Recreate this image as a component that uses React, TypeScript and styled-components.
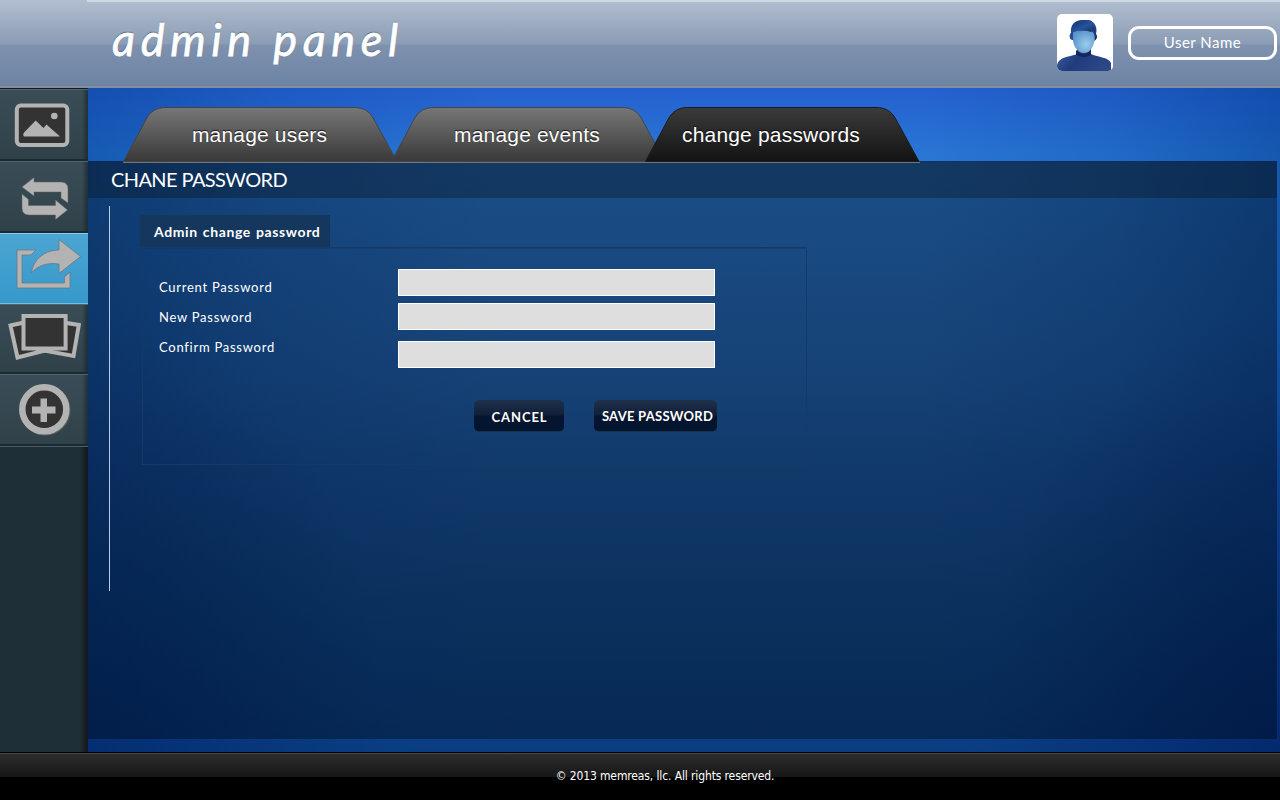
import React from "react";
import styled, { createGlobalStyle } from "styled-components";

const GlobalStyle = createGlobalStyle`
  * { box-sizing: border-box; }
  body { margin: 0; background: #000; overflow: hidden; }
`;

const gothic = `Lato, "Liberation Sans", sans-serif`;

const Page = styled.div`
  width: 1280px;
  height: 800px;
  display: flex;
  flex-direction: column;
  color: #fff;
  font-family: ${gothic};
`;

const Header = styled.header`
  height: 88px;
  flex: none;
  display: flex;
  align-items: flex-start;
  justify-content: space-between;
  padding: 0 3px 0 112px;
  border-bottom: 2px solid #848d9c;
  background:
    linear-gradient(#d0d8e4, #d0d8e4) 87px 0 / 1193px 2px no-repeat,
    linear-gradient(#b2bed0 0, #8b9cb4 44px, #7e92af 45px, #6d83a3 86px);
`;

const Brand = styled.h1`
  margin: 0;
  padding-top: 9px;
  font-family: Lato, cursive;
  font-style: italic;
  font-weight: 400;
  font-size: 45px;
  line-height: 60px;
  letter-spacing: 5.7px;
  white-space: nowrap;
  -webkit-text-stroke: 0.8px #fff;
  text-shadow: 0 -1px 1px #38495f;
`;

const Account = styled.div`
  display: flex;
  gap: 15px;
  padding-top: 14px;
`;

const Avatar = styled.svg`
  width: 56px;
  height: 57px;
  border-radius: 5px;
  background: #fff;
`;

const UserName = styled.div`
  width: 149px;
  height: 34px;
  margin-top: 12px;
  border: 3px solid #fff;
  border-radius: 11px;
  font-size: 15px;
  line-height: 27px;
  text-align: center;
  letter-spacing: 0.5px;
`;

const Body = styled.div`
  height: 664px;
  flex: none;
  display: flex;
`;

const Sidebar = styled.nav`
  width: 88px;
  flex: none;
  border-top: 1px solid #101b21;
  background: linear-gradient(90deg, #1f2f37 0, #1f2f37 80px, #151b1f 86px, #14181b 88px);
`;

const SideItem = styled.a<{ $h: number; $active?: boolean }>`
  display: block;
  height: ${(p) => p.$h}px;
  border-top: 1px solid ${(p) => (p.$active ? "#83cdec" : "#51656e")};
  border-bottom: ${(p) => (p.$active ? "1px solid #79bddd" : "2px solid #1b2930")};
  background: ${(p) =>
    p.$active
      ? "linear-gradient(#4ba5d2, #3698cb)"
      : "linear-gradient(90deg, transparent 82px, rgba(15,28,34,.5) 87px), linear-gradient(#3a4d56, #304149)"};
`;

const SideEnd = styled.div`
  height: 1px;
  background: #4b5d66;
`;

const SideIcon = styled.svg`
  display: block;
  width: 88px;
  height: 68px;
`;

const Main = styled.main`
  flex: 1;
  display: flex;
  flex-direction: column;
  padding: 19px 3px 13px 0;
  background:
    radial-gradient(ellipse 300px 440px at 0 100%, rgba(0,22,78,.36), transparent),
    radial-gradient(ellipse 300px 440px at 100% 100%, rgba(0,14,74,.4), transparent),
    linear-gradient(90deg, rgba(0,58,140,.46) 0, rgba(0,58,140,.2) 15%, transparent 34%, transparent 70%, rgba(0,58,140,.2) 86%, rgba(0,58,140,.5) 100%),
    linear-gradient(#2560d0 0, #2976d4 66px, #2876cc 112px, #2264b4 300px, #1b58a4 382px, #114d91 512px, #0a3d80 664px);
`;

const Tabs = styled.div`
  display: flex;
  height: 54px;
  padding-left: 35px;
`;

const Tab = styled.a<{ $overlap?: number }>`
  display: grid;
  flex: none;
  width: 275px;
  height: 56px;
  margin-left: ${(p) => -(p.$overlap || 0)}px;
  z-index: 1;
  > * { grid-area: 1 / 1; }
`;

const TabLabel = styled.span<{ $shift?: number }>`
  padding-right: ${(p) => p.$shift || 0}px;
  text-align: center;
  font-family: "Liberation Sans", Arial, sans-serif;
  font-size: 21px;
  line-height: 56px;
  letter-spacing: 0.18px;
  white-space: nowrap;
  text-shadow: 0 -1px 1px rgba(0,0,0,.75);
`;

const Panel = styled.section`
  flex: 1;
  background: rgba(0,0,0,.35);
`;

const PanelTitle = styled.h2`
  margin: 0;
  height: 37px;
  padding-left: 23px;
  border-top: 1px solid rgba(0,40,90,.2);
  background: rgba(6,14,22,.33);
  font-size: 20px;
  font-weight: 400;
  line-height: 35px;
  letter-spacing: -0.6px;
`;

const PanelBody = styled.div`
  margin: 8px 0 0 21px;
  height: 385px;
  border-left: 1px solid #b9cbdd;
  padding: 9px 0 0 30px;
`;

const FormTitle = styled.h3`
  margin: 0;
  width: 190px;
  height: 32px;
  padding-left: 14px;
  background: #15365d;
  font-size: 14px;
  font-weight: 700;
  line-height: 33px;
  letter-spacing: 0.62px;
  word-spacing: 1px;
  white-space: nowrap;
`;

const Form = styled.form`
  width: 665px;
  height: 218px;
  margin-left: 2px;
  border: 1px solid #153a66;
  box-shadow: inset 0 1px 0 rgba(15,50,95,.35);
  padding: 21px 0 0 16px;
`;

const Fields = styled.div`
  display: flex;
  height: 131px;
`;

const Labels = styled.div`
  width: 239px;
  padding-top: 3px;
`;

const Label = styled.label`
  display: block;
  height: 30px;
  font-size: 13px;
  line-height: 30px;
  letter-spacing: 0.74px;
`;

const Inputs = styled.div`
  display: flex;
  flex-direction: column;
`;

const Input = styled.input<{ $gap?: number }>`
  width: 317px;
  height: 27px;
  margin: 0 0 ${(p) => p.$gap || 0}px;
  padding: 0 6px;
  border: 1px solid #fff;
  border-radius: 0;
  background: #dedede;
  outline: 0;
`;

const Actions = styled.div`
  display: flex;
  gap: 30px;
  padding-left: 315px;
`;

const Button = styled.button<{ $w: number; $drop?: number; $indent?: number; $track?: number }>`
  width: ${(p) => p.$w}px;
  height: 32px;
  padding: ${(p) => p.$drop || 0}px 0 0 ${(p) => p.$indent || 0}px;
  border: 0;
  border-bottom: 1px solid #16304e;
  border-radius: 5px;
  background: linear-gradient(#20314b 0, #111f37 15px, #06152e 16px, #03142f 31px);
  color: #fff;
  font: 700 13px ${gothic};
  letter-spacing: ${(p) => p.$track || 0}px;
  white-space: nowrap;
`;

const Footer = styled.footer`
  flex: 1;
  border-top: 1px solid #000;
  background: linear-gradient(#484848 0, #484848 1px, #2c2c2c 1px, #171717 24px, #000 24px);
  text-align: center;
  padding-left: 50px;
  font-family: "DejaVu Sans Condensed", "DejaVu Sans", sans-serif;
  font-stretch: condensed;
  font-size: 12px;
  line-height: 46px;
  letter-spacing: -0.12px;
`;

function TabShape({ active }: { active?: boolean }) {
  const id = active ? "tabActive" : "tabIdle";
  return (
    <svg width="275" height="56" viewBox="0 0 275 56">
      <defs>
        <linearGradient id={id} x1="0" y1="0" x2="0" y2="1">
          <stop offset="0" stopColor={active ? "#3b3b3b" : "#777"} />
          <stop offset="1" stopColor={active ? "#131313" : "#393939"} />
        </linearGradient>
      </defs>
      <path
        d="M.5 54.500 L23 12.500 C27.500 4 34 .5 43 .5 H231 C240 .5 246.500 4 251 12.500 L274 54.500 Z"
        fill={`url(#${id})`}
        stroke={active ? "#1b1b1b" : "#444"}
      />
      <path d="M0 55.500 H275" stroke="#6c7580" />
    </svg>
  );
}

const grey = "#b3b3b3";
const dark = "#333";

export default function App() {
  return (
    <Page>
      <GlobalStyle />
      <Header>
        <Brand>admin panel</Brand>
        <Account>
          <Avatar viewBox="0 0 56 57">
            <defs>
              <radialGradient id="face" cx=".6" cy=".6" r=".65">
                <stop offset="0" stopColor="#9accee" />
                <stop offset="1" stopColor="#5a94cb" />
              </radialGradient>
              <linearGradient id="shirt" x1="0" x2="1" y1="0" y2=".4">
                <stop offset="0" stopColor="#3c62a6" />
                <stop offset=".5" stopColor="#203c7c" />
                <stop offset="1" stopColor="#2c4686" />
              </linearGradient>
              <linearGradient id="hair" x1="0" x2="1" y1="0" y2="1">
                <stop offset="0" stopColor="#16336f" />
                <stop offset=".5" stopColor="#28539c" />
                <stop offset="1" stopColor="#142653" />
              </linearGradient>
            </defs>
            <path d="M20 34 V40 C14 43 0 42 0 53 V57 H54 V49 C52 43 39 43 34 40 V34 Z" fill="url(#shirt)" />
            <path d="M19 36 Q27 44 34 36 V41 Q27 45 19 41 Z" fill="#14265c" />
            <path d="M15 26 C12 25 12 20 14 19 C13 11 18 6 25 6 H32 C37 7 41 13 39 20 C41 22 40 26 37 27 Z" fill="url(#hair)" />
            <path d="M16 18 C20 16 30 17 36 18 Q39 23 37 29 C35 36 31 39 27 39 C21 39 17 33 16 27 Z" fill="url(#face)" />
            <path d="M15 19 Q21 15.500 30 16.500 L34 18 L34.500 15 L37.500 18 Q38 8 27 8 Q15 8 15 19 Z" fill="url(#hair)" />
          </Avatar>
          <UserName>User Name</UserName>
        </Account>
      </Header>

      <Body>
        <Sidebar>
          <SideItem $h={72}>
            <SideIcon viewBox="0 90 88 68">
              <rect x="16.800" y="105.500" width="50.500" height="39.500" rx="4" fill={dark} stroke={grey} strokeWidth="4" />
              <path d="M23.500 136 Q22.500 134 24.500 132 L35.700 120.500 L43.500 128 L46.500 124.500 L60 136.500 H25 Q24 136.500 23.500 136 Z" fill={grey} />
              <circle cx="54.300" cy="116" r="3.300" fill={grey} />
            </SideIcon>
          </SideItem>
          <SideItem $h={72}>
            <SideIcon viewBox="0 162 88 68">
              <g fill={grey} stroke="#65625f" strokeWidth=".5">
                <path d="M22 187 L34 177.500 V182 H61 Q68 182 68 189 V203 L61 198 V192 H34 V196 Z" />
                <path d="M22 194 L28.500 199.500 V205.500 H55.500 V200 L67.500 210 L55.500 219.500 V215 H29 Q22 215 22 208 Z" />
              </g>
            </SideIcon>
          </SideItem>
          <SideItem $h={71} $active>
            <SideIcon viewBox="0 234 88 68">
              <g fill={grey} stroke="#697278" strokeWidth=".7">
                <path d="M17 250 H36 L31 255 H22 V283 H64.500 V277 L70 272 V288 H17 Z" />
                <path d="M59 239.500 L80.500 256.500 L59 273.500 V264 C47 262 37 266 31.500 273 C33 260 44 250 59 250 Z" />
              </g>
            </SideIcon>
          </SideItem>
          <SideItem $h={70}>
            <SideIcon viewBox="0 305 88 68">
              <g fill={dark} stroke={grey} strokeWidth="4">
                <path d="M10.500 325.500 L40 319 L47 350 L17.500 357.500 Z" />
                <path d="M42 319 L78.800 325 L73.500 356 L38 349.500 Z" />
                <path d="M23.500 316 H65.600 V348.500 H23.500 Z" />
              </g>
            </SideIcon>
          </SideItem>
          <SideItem $h={72}>
            <SideIcon viewBox="0 375 88 68">
              <circle cx="45" cy="410" r="22.500" fill="none" stroke="#5c6264" strokeWidth="6" />
              <circle cx="44.300" cy="409.300" r="22" fill={dark} stroke={grey} strokeWidth="6.500" />
              <path d="M40.500 398.500 H47 V406.500 H55.500 V413.500 H47 V422 H40.500 V413.500 H32 V406.500 H40.500 Z" fill={grey} />
            </SideIcon>
          </SideItem>
          <SideEnd />
        </Sidebar>

        <Main>
          <Tabs>
            <Tab>
              <TabShape />
              <TabLabel $shift={2}>manage users</TabLabel>
            </Tab>
            <Tab $overlap={7}>
              <TabShape />
              <TabLabel $shift={3}>manage events</TabLabel>
            </Tab>
            <Tab $overlap={21}>
              <TabShape active />
              <TabLabel $shift={23}>change passwords</TabLabel>
            </Tab>
          </Tabs>
          <Panel>
            <PanelTitle>CHANE PASSWORD</PanelTitle>
            <PanelBody>
              <FormTitle>Admin change password</FormTitle>
              <Form>
                <Fields>
                  <Labels>
                    <Label htmlFor="current">Current Password</Label>
                    <Label htmlFor="next">New Password</Label>
                    <Label htmlFor="confirm">Confirm Password</Label>
                  </Labels>
                  <Inputs>
                    <Input id="current" type="password" $gap={7} />
                    <Input id="next" type="password" $gap={11} />
                    <Input id="confirm" type="password" />
                  </Inputs>
                </Fields>
                <Actions>
                  <Button type="button" $w={90} $drop={2} $indent={1} $track={0.9}>CANCEL</Button>
                  <Button type="button" $w={123} $indent={4} $track={0.27}>SAVE PASSWORD</Button>
                </Actions>
              </Form>
            </PanelBody>
          </Panel>
        </Main>
      </Body>
      <Footer>© 2013 memreas, llc. All rights reserved.</Footer>
    </Page>
  );
}
